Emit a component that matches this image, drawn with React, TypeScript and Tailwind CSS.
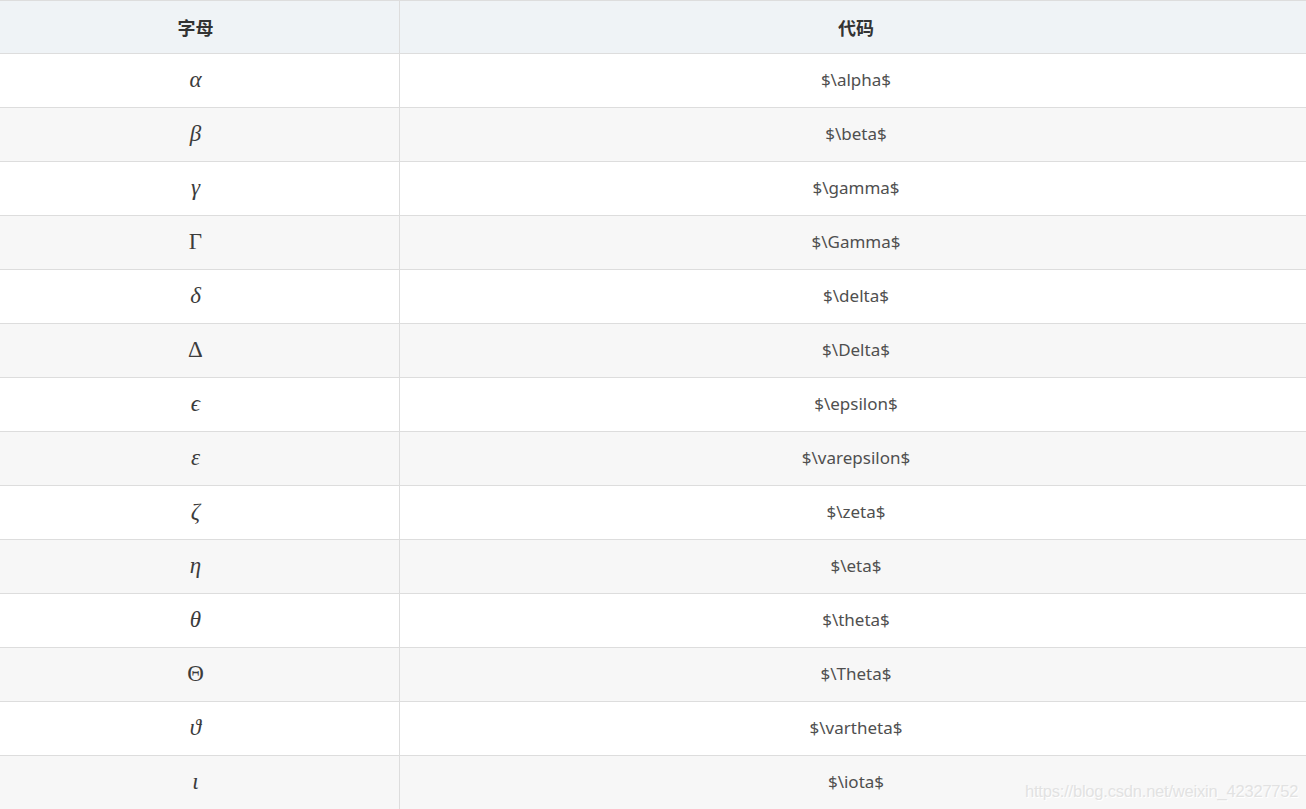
const rows: { sym: string; italic: boolean; code: string }[] = [
  { sym: "α", italic: true, code: "$\\alpha$" },
  { sym: "β", italic: true, code: "$\\beta$" },
  { sym: "γ", italic: true, code: "$\\gamma$" },
  { sym: "Γ", italic: false, code: "$\\Gamma$" },
  { sym: "δ", italic: true, code: "$\\delta$" },
  { sym: "Δ", italic: false, code: "$\\Delta$" },
  { sym: "ϵ", italic: true, code: "$\\epsilon$" },
  { sym: "ε", italic: true, code: "$\\varepsilon$" },
  { sym: "ζ", italic: true, code: "$\\zeta$" },
  { sym: "η", italic: true, code: "$\\eta$" },
  { sym: "θ", italic: true, code: "$\\theta$" },
  { sym: "Θ", italic: false, code: "$\\Theta$" },
  { sym: "ϑ", italic: true, code: "$\\vartheta$" },
  { sym: "ι", italic: true, code: "$\\iota$" },
];

export default function App() {
  return (
    <div className="relative w-[1306px] h-[809px] overflow-hidden bg-white font-['Noto_Sans','Noto_Sans_CJK_SC',sans-serif]">
      <div className="flex h-[54px] border-y border-[#dddddd] bg-[#eff3f6] text-[#333333] text-[18px] font-bold">
        <div className="w-[400px] border-r border-[#dddddd] flex items-center justify-center pr-[8px] font-['Noto_Sans_CJK_SC',sans-serif]">字母</div>
        <div className="flex-1 flex items-center justify-center pl-[6px] font-['Noto_Sans_CJK_SC',sans-serif]">代码</div>
      </div>
      {rows.map((r, i) => (
        <div
          key={r.code}
          className={
            "flex h-[54px] border-b border-[#dddddd] " +
            (i % 2 === 1 ? "bg-[#f7f7f7]" : "bg-white")
          }
        >
          <div className="w-[400px] border-r border-[#dddddd] flex items-center justify-center pr-[8px] pb-[3px]">
            <span
              className={
                "text-[23px] leading-none text-[#3c3c3c] font-['Liberation_Serif','DejaVu_Serif',serif] " +
                (r.italic ? "italic" : "not-italic")
              }
            >
              {r.sym}
            </span>
          </div>
          <div className="flex-1 flex items-center justify-center pl-[6px] pb-[1px] text-[17px] text-[#4f4f4f]">
            {r.code}
          </div>
        </div>
      ))}
      <div className="absolute left-[1025px] top-[779px] text-[16.5px] text-[#e2e2e2] [text-shadow:1px_1px_0_#ffffff] font-['Liberation_Sans',sans-serif] tracking-[-0.2px]">
        https://blog.csdn.net/weixin_42327752
      </div>
    </div>
  );
}
